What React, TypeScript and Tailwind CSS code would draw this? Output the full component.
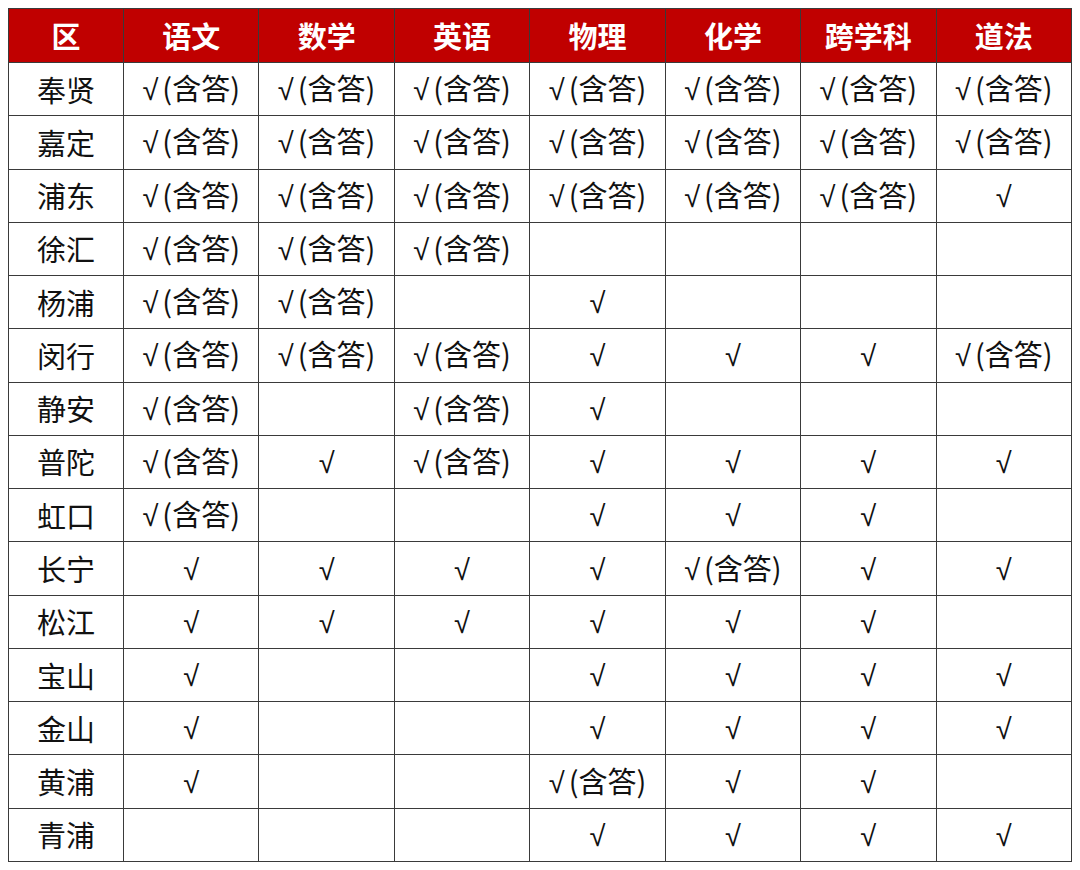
const headers = ['区', '语文', '数学', '英语', '物理', '化学', '跨学科', '道法'];

const A = '√(含答)';
const C = '√';
const E = '';

const rows: [string, string[]][] = [
  ['奉贤', [A, A, A, A, A, A, A]],
  ['嘉定', [A, A, A, A, A, A, A]],
  ['浦东', [A, A, A, A, A, A, C]],
  ['徐汇', [A, A, A, E, E, E, E]],
  ['杨浦', [A, A, E, C, E, E, E]],
  ['闵行', [A, A, A, C, C, C, A]],
  ['静安', [A, E, A, C, E, E, E]],
  ['普陀', [A, C, A, C, C, C, C]],
  ['虹口', [A, E, E, C, C, C, E]],
  ['长宁', [C, C, C, C, A, C, C]],
  ['松江', [C, C, C, C, C, C, E]],
  ['宝山', [C, E, E, C, C, C, C]],
  ['金山', [C, E, E, C, C, C, C]],
  ['黄浦', [C, E, E, A, C, C, E]],
  ['青浦', [E, E, E, C, C, C, C]],
];

// the tick looks like a plain "v" check in the screenshot, not the CJK radical
function Cell({ value }: { value: string }) {
  if (!value) return null;
  const rest = value.slice(1);
  return (
    <>
      <span className={`font-['Liberation_Sans',sans-serif] ${rest ? 'mr-[4px]' : ''}`}>√</span>
      {rest}
    </>
  );
}

export default function App() {
  return (
    <div
      className="w-[1080px] h-[870px] bg-white pt-[8px] pl-[8px]"
      style={{ fontFamily: '"Noto Sans CJK SC", "Noto Sans", sans-serif' }}
    >
      <table className="table-fixed border-collapse w-[1064px] text-[29px] text-[#111]">
        <colgroup>
          <col className="w-[115px]" />
          {headers.slice(1).map((h) => (
            <col key={h} />
          ))}
        </colgroup>
        <thead>
          <tr className="h-[54px] bg-[#c00000]">
            {headers.map((h) => (
              <th
                key={h}
                className="border border-[#3a3a3a] p-0 text-center font-bold text-white leading-none"
              >
                {h}
              </th>
            ))}
          </tr>
        </thead>
        <tbody>
          {rows.map(([name, cells]) => (
            <tr key={name} className="h-[53.27px]">
              <td className="border border-[#3a3a3a] p-0 text-center leading-none">{name}</td>
              {cells.map((c, i) => (
                <td key={i} className="border border-[#3a3a3a] p-0 text-center leading-none">
                  <Cell value={c} />
                </td>
              ))}
            </tr>
          ))}
        </tbody>
      </table>
    </div>
  );
}
